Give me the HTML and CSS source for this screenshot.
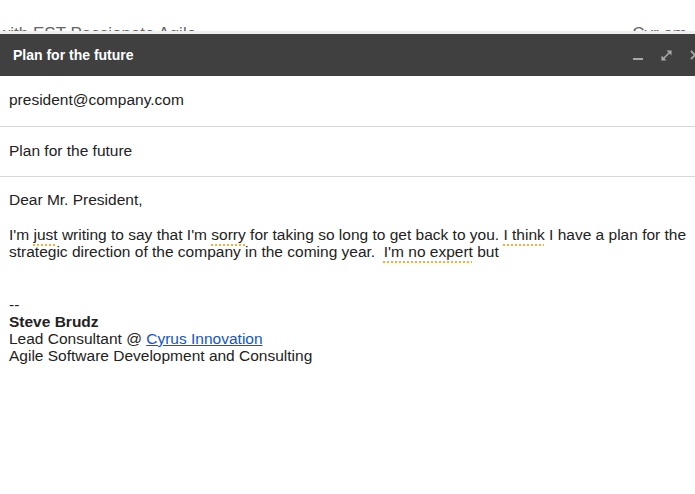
FILE: index.html
```html
<!DOCTYPE html>
<html lang="en">
<head>
    <meta charset="UTF-8">
    <meta name="viewport" content="width=device-width, initial-scale=1.0">
    <title>Compose - Plan for the future</title>
    <link rel="stylesheet" href="styles.css">
</head>
<body>
    <!-- inbox row peeking out behind the compose window -->
    <div class="behind">
        <span class="behind-left">with EST Passionate Agile</span>
        <span class="behind-right">Cyr am</span>
    </div>

    <div class="compose">
        <header class="compose-bar">
            <h1>Plan for the future</h1>
            <div class="bar-icons">
                <svg class="icon" width="12" height="12" viewBox="0 0 12 12">
                    <rect x="1" y="9" width="10" height="2" fill="#a8a8a8"/>
                </svg>
                <svg class="icon" width="13" height="13" viewBox="0 0 13 13">
                    <path d="M2 11 L11 2" stroke="#a8a8a8" stroke-width="1.6"/>
                    <path d="M6.5 1.5 H11.5 V6.5 Z" fill="#a8a8a8"/>
                    <path d="M1.5 6.5 V11.5 H6.5 Z" fill="#a8a8a8"/>
                </svg>
                <svg class="icon" width="12" height="12" viewBox="0 0 12 12">
                    <path d="M2 2 L10 10 M10 2 L2 10" stroke="#a8a8a8" stroke-width="1.8"/>
                </svg>
            </div>
        </header>

        <div class="field">president@company.com</div>
        <div class="field subject">Plan for the future</div>

        <div class="message">
            <p>Dear Mr. President,</p>
            <p>I'm <span class="spell">just</span> writing to say that I'm <span class="spell">sorry</span> for taking so long to get back to you. <span class="spell">I think</span> I have a plan for the strategic direction of the company in the coming year.&nbsp; <span class="spell">I'm no expert</span> but</p>
            <p class="gap"></p>
            <div class="signature">
                --<br>
                <b>Steve Brudz</b><br>
                Lead Consultant @ <a href="#">Cyrus Innovation</a><br>
                Agile Software Development and Consulting
            </div>
        </div>
    </div>
</body>
</html>
```

FILE: styles.css
```css
body {
    margin: 0;
    font-family: "Liberation Sans", Arial, sans-serif;
    background-color: #fff;
    color: #222;
    overflow: hidden;
}
.behind {
    height: 31px;
    border-bottom: 3px solid #efefef;
    overflow: hidden;
    display: flex;
    justify-content: space-between;
    font-size: 17px;
    color: #666;
}
.behind-left {
    margin-top: 24px;
    margin-left: -2px;
}
.behind-right {
    margin-top: 24px;
    margin-right: 8px;
}
.compose-bar {
    background-color: #404040;
    height: 42px;
    display: flex;
    align-items: center;
    justify-content: space-between;
    padding-left: 13px;
}
.compose-bar h1 {
    margin: 0;
    font-size: 14px;
    font-weight: bold;
    color: #fff;
}
.bar-icons {
    display: flex;
    align-items: center;
    gap: 16px;
    margin-right: -6px;
}
.icon {
    display: block;
}
.field {
    height: 50px;
    line-height: 48px;
    padding: 0 9px;
    border-bottom: 1px solid #d8d8d8;
    font-size: 15.5px;
    color: #222;
}
.field.subject {
    height: 49px;
    line-height: 47px;
}
.message {
    padding: 14px 3px 14px 9px;
    font-size: 15.5px;
    line-height: 17px;
}
.message p {
    margin: 0 0 18px 0;
}
.message .gap {
    height: 18px;
    margin: 0;
}
.spell {
    text-decoration: underline dotted #f2b13a;
    text-decoration-thickness: 2px;
    text-underline-offset: 4px;
}
.signature a {
    color: #1155cc;
}
```
